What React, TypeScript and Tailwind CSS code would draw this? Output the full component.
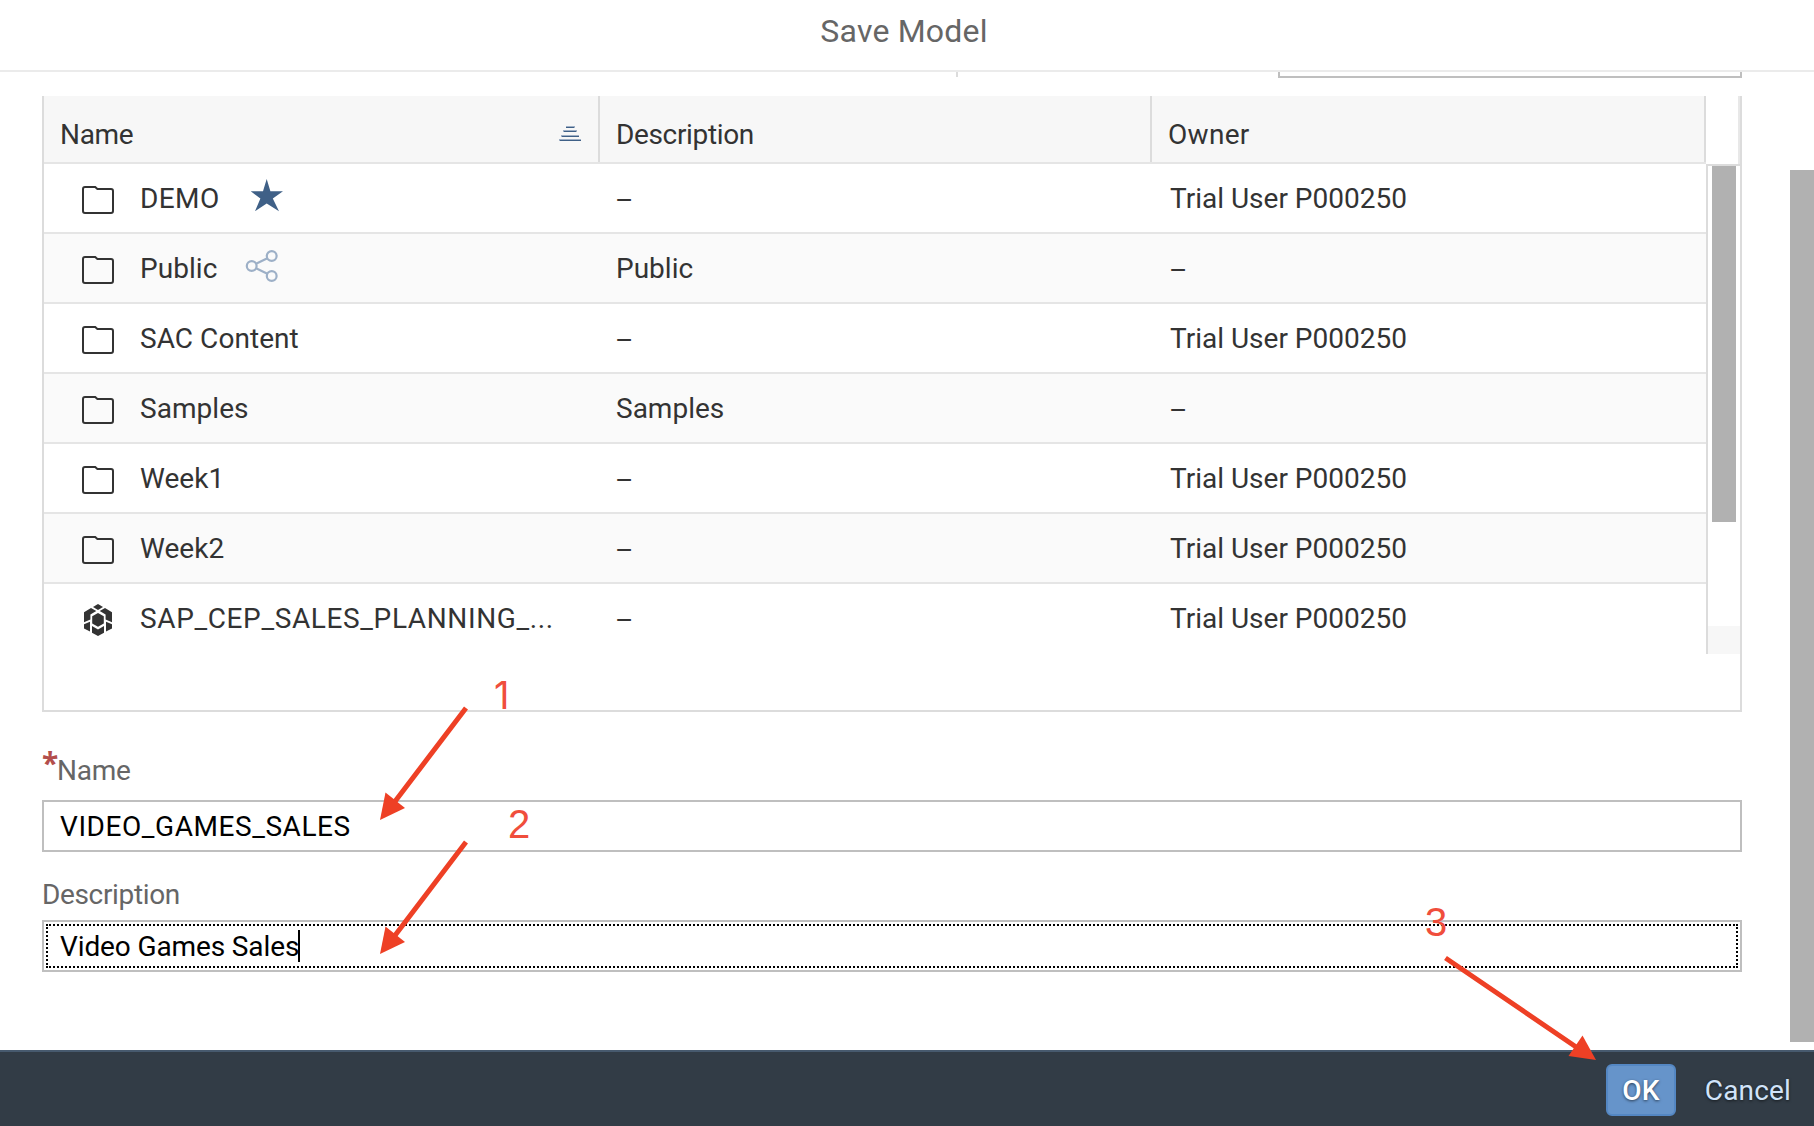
type Badge = "favorite" | "shared";

interface Entry {
  name: string;
  description: string;
  owner: string;
  kind?: "folder" | "model";
  badge?: Badge;
}

const entries: Entry[] = [
  { name: "DEMO", description: "–", owner: "Trial User P000250", badge: "favorite" },
  { name: "Public", description: "Public", owner: "–", badge: "shared" },
  { name: "SAC Content", description: "–", owner: "Trial User P000250" },
  { name: "Samples", description: "Samples", owner: "–" },
  { name: "Week1", description: "–", owner: "Trial User P000250" },
  { name: "Week2", description: "–", owner: "Trial User P000250" },
  { name: "SAP_CEP_SALES_PLANNING_...", description: "–", owner: "Trial User P000250", kind: "model" },
];

function FolderIcon() {
  return (
    <svg width="32" height="28" viewBox="0 0 32 28" fill="none" stroke="#333" strokeWidth="2">
      <path d="M3 1H13.2L15.4 3H29Q31 3 31 5V25Q31 27 29 27H3Q1 27 1 25V3Q1 1 3 1Z" />
    </svg>
  );
}

function ModelIcon() {
  return (
    <svg width="32" height="32" viewBox="0 0 32 32" fill="#333">
      <path d="M16 0L21 3L16 6L11 3Z" />
      <path d="M9 4L14.3 7L8.4 10.4V15.4L2 18.3V8.3Z" />
      <path d="M23 4L17.7 7L23.6 10.4V15.4L30 18.3V8.3Z" />
      <path d="M16 9L21.8 12.3V19.500L16 22.800L10.200 19.500V12.300Z" />
      <path d="M2 20.200L8 17.800V27.600L2 24.400Z" />
      <path d="M30 20.200L24 17.800V27.600L30 24.400Z" />
      <path d="M10 22L16 25.500L22 22V28.800L16 32L10 28.800Z" />
    </svg>
  );
}

function StarIcon() {
  return (
    <svg className="ml-[30px] -mt-[5px]" width="34" height="33" viewBox="0 0 34 33" fill="#3f6087">
      <path d="M16.7 0L20.4 12.2H33L22.8 19.6L29 32.3L16.7 24.6L5 32.3L10.4 19.6L0.7 12.2H13Z" />
    </svg>
  );
}

function ShareIcon() {
  return (
    <svg
      className="ml-[28px] -mt-[4px]"
      width="34"
      height="34"
      viewBox="0 0 34 34"
      fill="none"
      stroke="#9db0c7"
      strokeWidth="2.2"
    >
      <circle cx="6.7" cy="17" r="4.9" />
      <circle cx="26.7" cy="7" r="4.9" />
      <circle cx="26.7" cy="27" r="4.9" />
      <path d="M11 14.8L22.4 9.2M11 19.2L22.4 24.8" />
    </svg>
  );
}

function SortIcon() {
  return (
    <svg width="22" height="16" viewBox="0 0 22 16">
      <g fill="#9fb0c6">
        <rect x="7" y="0" width="9" height="2" />
        <rect x="4" y="4" width="14" height="2" />
        <rect x="2" y="9" width="18" height="2" />
        <rect x="0" y="13" width="23" height="2" />
      </g>
      <g fill="#3f6087">
        <rect x="7" y="1" width="8" height="1" />
        <rect x="5" y="5" width="12" height="1" />
        <rect x="3" y="10" width="17" height="1" />
        <rect x="1" y="14" width="21" height="1" />
      </g>
    </svg>
  );
}

function Cell({ text }: { text: string }) {
  return <span className={text === "–" ? "-ml-px block pt-[6px]" : "block pt-[2px]"}>{text}</span>;
}

function TableRow({ entry, index }: { entry: Entry; index: number }) {
  const model = entry.kind === "model";
  return (
    <div
      className={`flex h-[70px] items-center border-b-2 ${index % 2 ? "bg-[#fafafa]" : "bg-white"} ${
        index === entries.length - 1 ? "border-transparent" : "border-[#e5e5e5]"
      }`}
    >
      <div className="flex w-[556px] items-center pl-[38px]">
        <div className="w-8 shrink-0 pt-1">{model ? <ModelIcon /> : <FolderIcon />}</div>
        <span
          className={`ml-[26px] whitespace-nowrap pt-[2px] ${
            model ? "tracking-[0.63px]" : entry.badge === "favorite" ? "tracking-[0.4px]" : "tracking-[0.05px]"
          }`}
        >
          {entry.name}
        </span>
        {entry.badge === "favorite" && <StarIcon />}
        {entry.badge === "shared" && <ShareIcon />}
      </div>
      <div className="w-[554px] pl-4">
        <Cell text={entry.description} />
      </div>
      <div className="pl-4">
        <Cell text={entry.owner} />
      </div>
    </div>
  );
}

function ResourceTable() {
  return (
    <div className="mt-[18px] flex h-[616px] w-[1700px] flex-col border-2 border-t-0 border-[#dcdcdc] text-[#333]">
      <div className="flex h-[68px]">
        <div className="flex w-[1662px] border-b-2 border-[#e5e5e5] bg-[#f7f7f7] leading-[66px]">
          <div className="flex w-[556px] justify-between border-r-2 border-[#dcdcdc] pt-[6px] pr-[17px] pl-4">
            <span className="tracking-[-0.3px]">Name</span>
            <span className="pt-[24px]">
              <SortIcon />
            </span>
          </div>
          <div className="w-[552px] border-r-2 border-[#dcdcdc] pt-[6px] pl-4 tracking-[-0.35px]">Description</div>
          <div className="w-[554px] border-r-2 border-[#dcdcdc] pt-[6px] pl-4 tracking-[0.3px]">Owner</div>
        </div>
        <div className="ml-auto w-[2px] bg-[#e8e8e8]" />
      </div>
      <div className="flex h-[490px]">
        <div className="w-[1662px]">
          {entries.map((entry, i) => (
            <TableRow key={entry.name} entry={entry} index={i} />
          ))}
        </div>
        <div className="flex w-[34px] flex-col border-t-2 border-l-2 border-[#dcdcdc]">
          <div className="ml-1 h-[356px] w-6 bg-[#b1b1b1]" />
          <div className="mt-auto h-7 bg-[#f7f7f7]" />
        </div>
      </div>
    </div>
  );
}

function Annotations() {
  return (
    <>
      <svg
        className="pointer-events-none absolute top-0 left-0"
        width="1814"
        height="1126"
        fill="#ee4025"
        stroke="#ee4025"
      >
        <path d="M466 708L390 808M466 842L390 942M1445.5 958L1582 1051" strokeWidth="5" fill="none" />
        <path stroke="none" d="M380 820L385.5 792.5L405 808Z" />
        <path stroke="none" d="M380 954L385.5 926.5L405 942Z" />
        <path stroke="none" d="M1596 1060L1582.5 1035.5L1568.5 1056Z" />
      </svg>
      <span className="absolute top-[671px] left-[494px] font-['Inter',sans-serif] text-[38px] leading-[48px] text-[#f04e3c]">
        1
      </span>
      <span className="absolute top-[800px] left-[508px] font-['Liberation_Sans',sans-serif] text-[40px] leading-[48px] text-[#f04e3c]">
        2
      </span>
      <span className="absolute top-[898px] left-[1425px] font-['Liberation_Sans',sans-serif] text-[40px] leading-[48px] text-[#f04e3c]">
        3
      </span>
    </>
  );
}

export default function App() {
  return (
    <div className="relative flex h-[1126px] w-[1814px] flex-col overflow-hidden bg-white font-['Roboto',sans-serif] text-[28px]">
      <header className="h-[72px] border-b-2 border-[#ebebeb] text-center text-[32px] leading-[62px] text-[#666]">
        <span className="relative -left-[3px] tracking-[0.2px]">Save Model</span>
      </header>

      <main className="flex flex-1 justify-between pl-[42px]">
        <div className="flex w-[1700px] flex-col">
          <div className="flex h-[6px] justify-between pl-[914px]">
            <div className="h-[5px] w-[2px] bg-[#dcdcdc]" />
            <div className="w-[464px] border-2 border-t-0 border-[#bfbfbf]" />
          </div>

          <ResourceTable />

          <label className="mt-[36px] flex h-[52px] items-start leading-[44px] text-[#666]">
            <span className="-mt-[7px] w-[15px] font-['Noto_Sans',sans-serif] text-[30px] font-bold text-[#b34e4c]">
              *
            </span>
            <span className="pt-px tracking-[-0.25px]">Name</span>
          </label>
          <div className="flex h-[52px] items-center border-2 border-[#bfbfbf] pt-[2px] pl-4 tracking-[0.57px] text-black">
            VIDEO_GAMES_SALES
          </div>

          <label className="mt-5 h-12 leading-[46px] tracking-[-0.35px] text-[#666]">Description</label>
          <div className="flex h-[52px] border-2 border-[#bfbfbf] p-[2px] text-black">
            <div className="flex flex-1 items-center border-2 border-dotted border-black pl-3">
              <span className="pt-[2px] tracking-[-0.12px]">Video Games Sales</span>
              <span className="-ml-px h-8 w-[2px] bg-black" />
            </div>
          </div>
        </div>
        <div className="mt-[98px] h-[872px] w-6 bg-[#b1b1b1]" />
      </main>

      <footer className="flex h-[76px] items-start justify-end border-t-2 border-[#475a6e] bg-[#323c46] pt-3 pr-[23px]">
        <button className="h-[52px] w-[70px] rounded-[6px] border-2 border-[#5487c3] bg-[#6694ca] pt-px leading-[48px] font-medium text-white [text-shadow:0_1px_3px_rgba(0,0,0,0.6)]">
          OK
        </button>
        <button className="ml-[29px] h-[52px] pt-px leading-[52px] tracking-[0.15px] text-[#d1e3f9] [text-shadow:0_1px_3px_rgba(0,0,0,0.6)]">
          Cancel
        </button>
      </footer>

      <Annotations />
    </div>
  );
}
